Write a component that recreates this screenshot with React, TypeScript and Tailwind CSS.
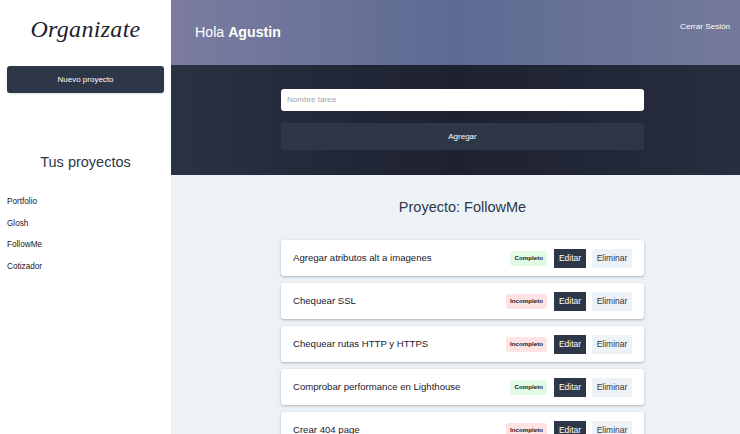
import React from "react";

const tasks = [
  { name: "Agregar atributos alt a imagenes", done: true },
  { name: "Chequear SSL", done: false },
  { name: "Chequear rutas HTTP y HTTPS", done: false },
  { name: "Comprobar performance en Lighthouse", done: true },
  { name: "Crear 404 page", done: false },
];

const projects = ["Portfolio", "Glosh", "FollowMe", "Cotizador"];

export default function App() {
  return (
    <div
      className="flex w-[740px] h-[434px] overflow-hidden bg-white text-[#1a202c]"
      style={{ fontFamily: '"Liberation Sans", Arial, sans-serif' }}
    >
      <aside className="w-[171px] shrink-0 bg-white flex flex-col">
        <h1
          className="text-center text-[24px] italic text-[#1a202c] pt-[13px] leading-[32px] tracking-[0.3px]"
          style={{ fontFamily: '"Liberation Serif", "Times New Roman", serif', fontWeight: 400 }}
        >
          Organizate
        </h1>
        <button className="mx-[7px] mt-[21px] h-[27px] rounded-[3px] bg-[#2d3748] text-white text-[8px] shadow-sm">
          Nuevo proyecto
        </button>
        <h2 className="mt-[59px] text-center text-[14.5px] text-[#2d3748] leading-[20px]">
          Tus proyectos
        </h2>
        <ul className="mt-[24px] pl-[7px] flex flex-col gap-[10px] text-[8.2px] leading-[11.5px] text-[#1a202c]">
          {projects.map((p) => (
            <li key={p}>{p}</li>
          ))}
        </ul>
      </aside>
      <main className="flex-1 flex flex-col bg-[#edf2f7]">
        <header className="h-[65px] shrink-0 flex justify-between bg-[linear-gradient(90deg,#7b7c9f_0%,#5d6b93_50%,#747a9a_100%)] text-white">
          <div className="pl-[24px] pt-[23px] text-[14.2px] leading-[18px]">
            Hola <span className="font-bold">Agustin</span>
          </div>
          <div className="pr-[10px] pt-[21px] text-[8.1px] leading-[11px]">Cerrar Sesión</div>
        </header>
        <section className="h-[110px] shrink-0 flex flex-col items-center pl-[14px] pt-[24px] bg-[linear-gradient(90deg,#2b3244_0%,#1d2130_50%,#282e3f_100%)]">
          <div className="w-[363px] h-[22px] rounded-[3px] bg-white flex items-center pl-[6px] text-[8px] text-[#9ca3af]">
            Nombre tarea
          </div>
          <button className="mt-[12px] w-[363px] h-[27px] rounded-[2px] bg-[#2d3748] text-white text-[8px]">
            Agregar
          </button>
        </section>
        <section className="flex flex-col items-center pl-[14px]">
          <h2 className="mt-[22px] text-[14.5px] leading-[20px] text-[#2d3748]">Proyecto: FollowMe</h2>
          <ul className="mt-[23px] w-[363px] flex flex-col gap-[7px]">
            {tasks.map((t) => (
              <li
                key={t.name}
                className="h-[36px] shrink-0 bg-white rounded-[3px] shadow-[0_1px_3px_rgba(0,0,0,0.18),0_1px_2px_rgba(0,0,0,0.1)] flex items-center pl-[12px] pr-[12px]"
              >
                <span className="flex-1 text-[9.6px] text-[#1a202c]">{t.name}</span>
                <span
                  className={
                    "h-[15px] px-[4px] rounded-[3px] flex items-center text-[6.2px] font-bold text-[#1a202c] " +
                    (t.done ? "bg-[#e3fbe6]" : "bg-[#fde3e3]")
                  }
                >
                  {t.done ? "Completo" : "Incompleto"}
                </span>
                <button className="ml-[7px] h-[19px] w-[32px] bg-[#2d3748] text-white text-[8.5px] flex items-center justify-center">
                  Editar
                </button>
                <button className="ml-[6px] h-[19px] w-[40px] bg-[#edf2f7] text-[#2d3748] text-[8.5px] flex items-center justify-center">
                  Eliminar
                </button>
              </li>
            ))}
          </ul>
        </section>
      </main>
    </div>
  );
}
